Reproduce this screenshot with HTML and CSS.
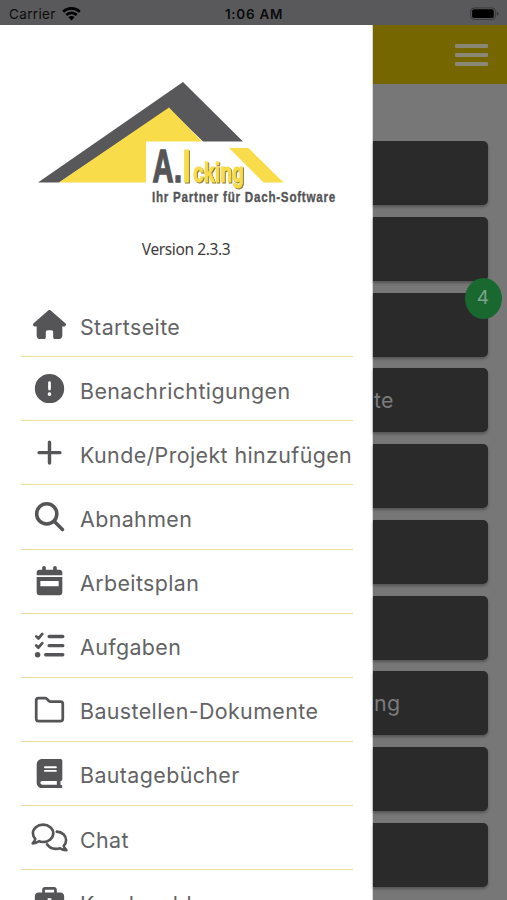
FILE: index.html
```html
<!DOCTYPE html>
<html lang="de">
<head>
<meta charset="utf-8">
<meta name="viewport" content="width=device-width, initial-scale=1">
<title>A. Icking</title>
<link rel="stylesheet" href="styles.css">
</head>
<body>
<header class="status">
  <div class="carrier"><span>Carrier</span>
    <svg class="wifi" viewBox="0 0 18 14"><path d="M.3 4.4a12.4 12.4 0 0 1 17.4 0l-1.7 1.8a10 10 0 0 0-14 0zM3.2 7.5a8.2 8.2 0 0 1 11.6 0l-1.7 1.8a5.8 5.8 0 0 0-8.2 0zM6.1 10.6a4.1 4.1 0 0 1 5.8 0L9 13.6z"/></svg>
  </div>
  <div class="clock">1:06 AM</div>
  <svg class="battery" viewBox="0 0 30 14"><rect x=".7" y=".7" width="25.6" height="12" rx="3.6" fill="none" stroke="#38383a" stroke-width="1"/><rect x="2.2" y="2.2" width="22.4" height="9" rx="2"/><path d="M27.6 4.5q2 .8 2 2.2t-2 2.2z" fill="#38383a"/></svg>
</header>
<div class="body">
  <aside class="drawer">
    <svg class="logo" viewBox="0 0 310 135" role="img">
      <path d="M1 108.500 146 8l60 59.500h-40L132 34.500 22 108.500z" fill="#58585a"/>
      <path d="M22 108.500 132 33.500l33 34h-56v41z" fill="#f8dc4a"/>
      <path d="M192 74h19.500l35 34.500h-20z" fill="#f8dc4a"/>
      <text class="lt big" x="115.500" y="107.500" font-size="46" textLength="21" lengthAdjust="spacingAndGlyphs">A</text>
      <text class="lt big" x="137" y="107.500" font-size="40" textLength="8" lengthAdjust="spacingAndGlyphs">.</text>
      <text class="lt gold" x="145.500" y="107.500" font-size="46" textLength="8" lengthAdjust="spacingAndGlyphs">I</text>
      <text class="lt gold" x="156" y="107.500" font-size="27" textLength="51" lengthAdjust="spacingAndGlyphs">cking</text>
      <text class="lt small" x="115" y="127.500" font-size="15.500" letter-spacing="1" textLength="184" lengthAdjust="spacingAndGlyphs">Ihr Partner für Dach-Software</text>
    </svg>
    <p class="version">Version 2.3.3</p>
    <nav class="menu">
      <a class="item"><svg viewBox="0 0 576 512"><path d="M575.800 255.500c0 18-15 32.100-32 32.100h-32l.7 160.200c0 35-28 64.200-64 64.200H392c-22 0-40-18-40-40v-88c0-17.700-14.300-32-32-32h-64c-17.700 0-32 14.300-32 32v88c0 22-18 40-40 40h-56c-35 0-64-29-64-64V287.600H32c-18 0-32-14-32-32.100 0-9 3-17 10-24L266.400 8c7-7 15-8 22-8s15 2 21 7l255.400 224.500c8 7 12 15 11 24z"/></svg><span>Startseite</span></a>
      <a class="item"><svg viewBox="-32 0 576 512"><path fill-rule="evenodd" d="M256 0a256 256 0 1 1 0 512 256 256 0 0 1 0-512zm0 128c-13.300 0-24 10.700-24 24v112a24 24 0 0 0 48 0V152c0-13.300-10.700-24-24-24zm32 224a32 32 0 1 0-64 0 32 32 0 0 0 64 0z"/></svg><span>Benachrichtigungen</span></a>
      <a class="item"><svg viewBox="-64 0 576 512"><path d="M224 74v364M42 256h364" fill="none" stroke="currentColor" stroke-width="60" stroke-linecap="round"/></svg><span>Kunde/Projekt hinzufügen</span></a>
      <a class="item"><svg viewBox="-32 0 576 512"><g fill="none" stroke="currentColor" stroke-width="62" stroke-linecap="round"><circle cx="208" cy="208" r="176"/><path d="m338 338 144 144"/></g></svg><span>Abnahmen</span></a>
      <a class="item"><svg viewBox="-64 0 576 512"><path fill-rule="evenodd" d="M128 0c17.700 0 32 14.300 32 32v32h128V32a32 32 0 0 1 64 0v32h48c26.500 0 48 21.500 48 48v48H0v-48c0-26.500 21.500-48 48-48h48V32c0-17.700 14.300-32 32-32zM0 192h448v272c0 26.500-21.500 48-48 48H48c-26.500 0-48-21.500-48-48zm64 72v88h320v-88z"/></svg><span>Arbeitsplan</span></a>
      <a class="item"><svg viewBox="-32 0 576 512"><g fill="none" stroke="currentColor" stroke-width="48" stroke-linecap="round" stroke-linejoin="round"><path d="m24 94 38 38 68-80M24 254l38 38 68-80"/><path d="M250 96h238M250 256h238M190 416h298" stroke-width="60"/></g><circle cx="48" cy="416" r="48"/></svg><span>Aufgaben</span></a>
      <a class="item"><svg viewBox="-32 0 576 512"><path d="M64 56h117q17 0 29 12l36 36q12 12 28 12h174q40 0 40 40v260q0 40-40 40H64q-40 0-40-40V96q0-40 40-40z" fill="none" stroke="currentColor" stroke-width="48"/></svg><span>Baustellen-Dokumente</span></a>
      <a class="item"><svg viewBox="-64 0 576 512"><path fill-rule="evenodd" d="M96 0C43 0 0 43 0 96v320c0 53 43 96 96 96h320a32 32 0 0 0 0-64v-64c18 0 32-14 32-32V32c0-18-14-32-32-32zm0 384h256v64H96a32 32 0 0 1 0-64zm32-240c0-9 7-16 16-16h192a16 16 0 0 1 0 32H144c-9 0-16-7-16-16zm16 48h192a16 16 0 0 1 0 32H144a16 16 0 0 1 0-32z"/></svg><span>Bautagebücher</span></a>
      <a class="item chat"><svg viewBox="0 0 640 512"><g fill="none" stroke="currentColor" stroke-width="46" stroke-linejoin="round" stroke-linecap="round"><path d="M26 356q40-42 46-78Q30 234 30 180C30 96 108 28 208 28s178 68 178 152-78 152-178 152q-40 0-72-12-48 36-110 36z"/><path d="M448 150c92 4 162 68 162 150q0 52-42 98 8 38 46 78-64 0-110-36-32 12-72 12-104 0-154-80"/></g></svg><span>Chat</span></a>
      <a class="item"><svg viewBox="-32 0 576 512"><path fill-rule="evenodd" d="M176 0h160c26 0 48 22 48 48v48h64c35 0 64 29 64 64v288c0 35-29 64-64 64H64c-35 0-64-29-64-64V160c0-35 29-64 64-64h64V48c0-26 22-48 48-48zm0 48v48h160V48zm48 150v58h-56v56h56v56h64v-56h56v-56h-56v-58z"/></svg><span>Krankmeldungen</span></a>
    </nav>
  </aside>
  <main class="page">
    <div class="bar"><i></i><i></i><i></i></div>
    <div class="cards">
      <div class="card"></div><div class="card"></div>
      <div class="card"><b class="badge">4</b></div>
      <div class="card">te</div><div class="card"></div><div class="card"></div><div class="card"></div>
      <div class="card">ng</div><div class="card"></div><div class="card"></div>
    </div>
  </main>
</div>
</body>
</html>
```
FILE: styles.css
```css
* { box-sizing: border-box; }
body { margin: 0; width: 507px; height: 900px; overflow: hidden; background: #777; font-family: Inter, "Liberation Sans", sans-serif; }
.status { height: 25px; background: #59595b; color: #0b0b0c; display: grid; grid-template-columns: 1fr auto 1fr; align-items: center; padding: 2px 8px 0 9px; font-size: 13.500px; }
.carrier { display: flex; align-items: center; gap: 6px; letter-spacing: .35px; }
.wifi { width: 19px; height: 15px; }
.clock { font-weight: 600; letter-spacing: .7px; }
.battery { width: 29px; height: 14px; justify-self: end; }
.body { display: flex; height: 875px; }
.drawer { flex: 0 0 373px; background: #fff; overflow: hidden; border-right: 1px solid #d8d8d8; }
.logo { display: block; width: 310px; height: 135px; margin: 49px 0 0 37px; }
.lt { font-family: "Liberation Sans Narrow", "Liberation Sans", sans-serif; font-weight: 700; fill: #555557; }
.lt.big { stroke: #555557; stroke-width: 1.500px; }
.lt.small { stroke: #555557; stroke-width: .35px; }
.lt.gold { fill: #f8dc4a; stroke: #f8dc4a; stroke-width: 1px; filter: drop-shadow(1px 1px 0 #8b7a36); }
.version { margin: 29px 0 0; height: 23px; text-align: center; font: 15.500px/23px "Noto Sans", sans-serif; letter-spacing: -.4px; color: #3c3c3c; }
.menu { margin: 32px 19px 0 21px; }
.item { height: 64.130px; border-bottom: 1.500px solid #eddf98; display: flex; align-items: center; color: #555557; font-size: 21.400px; letter-spacing: .4px; white-space: nowrap; }
.item svg { flex: none; width: 33px; height: 29.300px; margin: 0 14px 0 12px; fill: currentColor; }
.item.chat svg { width: 37px; margin: 0 12px 0 10px; }
.item span { padding-top: 4px; color: #636365; }
.page { flex: 1; min-width: 0; background: #777; }
.bar { height: 59px; background: #766600; display: flex; flex-direction: column; align-items: flex-end; justify-content: center; gap: 5px; padding-right: 19px; }
.bar i { width: 33px; height: 4px; border-radius: 1px; background: #8a8875; }
.cards { display: grid; gap: 11.750px; padding: 57px 19.500px 0 0; }
.card { position: relative; height: 64px; background: #2a2a2b; border-radius: 0 5px 5px 0; box-shadow: 0 2px 3px rgba(0,0,0,.3); color: #7b7b7c; font-size: 21.400px; letter-spacing: .3px; line-height: 64px; padding-left: 1px; }
.badge { position: absolute; right: -14px; top: -15px; width: 37px; height: 41px; border-radius: 50%; background: #18682f; color: #7da487; text-align: center; line-height: 39px; font-size: 19px; font-weight: 400; }
```
